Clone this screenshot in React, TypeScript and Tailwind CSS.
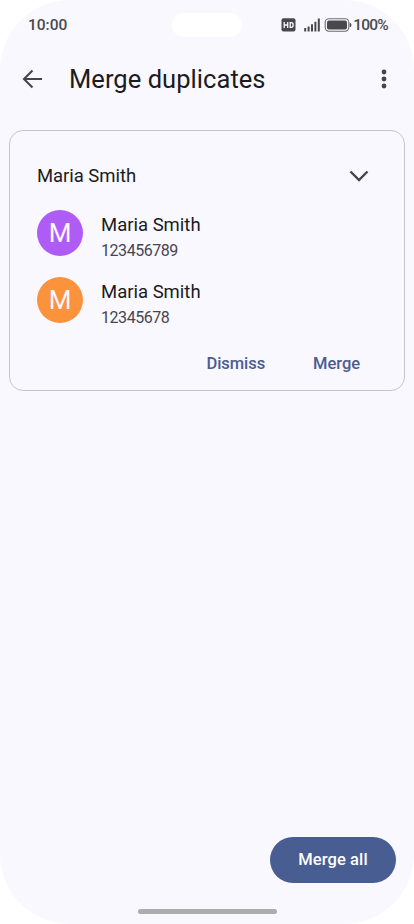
type Contact = {
  name: string;
  phone: string;
  color: string;
};

const contacts: Contact[] = [
  { name: 'Maria Smith', phone: '123456789', color: 'bg-[#af5cf7]' },
  { name: 'Maria Smith', phone: '12345678', color: 'bg-[#fb923c]' },
];

function StatusBar() {
  return (
    <div className="flex h-[50px] items-center justify-between pl-7 pr-[26px] text-[#49494d]">
      <span className="w-[144px] pt-[2px] text-[15.5px] font-medium">10:00</span>
      <div className="h-6 w-[70px] rounded-full bg-white" />
      <div className="flex w-[146px] items-center justify-end">
        <svg width="72" height="16" viewBox="0 0 72 16" className="shrink-0">
          <rect x="0.5" y="1.3" width="14" height="13.2" rx="2" fill="#49494d" />
          <path
            d="M3.2 5v6M6.7 5v6M3.2 8h3.5M9.2 5.6v4.8h.9c1.6 0 2.1-.9 2.1-2.4s-.5-2.4-2.1-2.4z"
            fill="none"
            stroke="#f9f8ff"
            strokeWidth="1.3"
          />
          <path
            d="M24.2 11v3.5M27.6 9.5v5M31 7.2v7.3M34.4 4.8v9.7M37.8 1.5v13"
            stroke="#49494d"
            strokeWidth="2"
          />
          <rect x="44.2" y="1.8" width="23.6" height="12.4" rx="3.6" fill="none" stroke="#6c6c70" strokeWidth="1.1" />
          <rect x="46" y="3.6" width="20" height="8.8" rx="2" fill="#49494d" />
          <path d="M69 6c1.5.5 1.5 3.5 0 4z" fill="#49494d" stroke="#49494d" strokeWidth="0.6" />
        </svg>
        <span className="text-[15.5px] font-medium leading-5 tracking-[-0.8px]">100%</span>
      </div>
    </div>
  );
}

function AppBar() {
  return (
    <header className="flex h-[58px] items-center pl-[22px] pr-[18px]">
      <button aria-label="Back">
        <svg width="22" height="22" viewBox="0 0 22 22" fill="none" stroke="#45454d" strokeWidth="2.1">
          <path d="M20 11H2.5M10.5 2.5L2 11l8.5 8.5" />
        </svg>
      </button>
      <h1 className="ml-[25px] flex-1 text-[25.5px] tracking-[0.05px] text-[#1b1b21]">Merge duplicates</h1>
      <button aria-label="More options">
        <svg width="24" height="22" viewBox="0 0 24 22" fill="#45454d">
          <circle cx="12" cy="4" r="2.4" />
          <circle cx="12" cy="11" r="2.4" />
          <circle cx="12" cy="18" r="2.4" />
        </svg>
      </button>
    </header>
  );
}

function ContactRow({ contact }: { contact: Contact }) {
  return (
    <li className="flex h-[46px]">
      <div className={`flex size-[46px] items-center justify-center rounded-full pt-px text-[26px] text-[#fdf7ff] ${contact.color}`}>
        M
      </div>
      <div className="ml-[18px] pt-[2px]">
        <p className="text-[18.5px] leading-[26px] text-[#1b1b21]">{contact.name}</p>
        <p className="text-[16px] leading-[26px] tracking-[-0.45px] text-[#47464f]">{contact.phone}</p>
      </div>
    </li>
  );
}

export default function App() {
  return (
    <div className="h-[924px] w-[414px] bg-white font-['Roboto','Liberation_Sans',sans-serif]">
      <div className="flex h-full flex-col rounded-[70px] bg-[#f9f8ff]">
        <StatusBar />
        <AppBar />

        <section className="mx-[9px] mt-[22px] h-[261px] rounded-[14px] border border-[#c6c5cf] pl-[27px] pr-[35px]">
          <div className="mt-[33px] flex h-6 items-center justify-between">
            <h2 className="pt-[2px] text-[18.5px] tracking-[-0.05px] text-[#1b1b21]">Maria Smith</h2>
            <svg width="20" height="12" viewBox="0 0 20 12" fill="none" stroke="#45454d" strokeWidth="2.4">
              <path d="M1.5 1.5l8.5 8.5 8.5-8.5" />
            </svg>
          </div>
          <ul className="mt-[22px] flex flex-col gap-[20.5px]">
            {contacts.map((contact) => (
              <ContactRow key={contact.phone} contact={contact} />
            ))}
          </ul>
          <div className="mt-[29.5px] flex justify-end gap-12 pr-[9px] text-[16.5px] font-medium leading-6 tracking-[-0.05px] text-[#4a5c92]">
            <button>Dismiss</button>
            <button>Merge</button>
          </div>
        </section>

        <button className="mb-[26px] mr-[18px] mt-auto h-[46px] w-[126px] self-end rounded-full bg-[#485d92] text-[16.5px] font-medium tracking-[0.1px] text-white">
          Merge all
        </button>
        <div className="mb-[10px] h-[5px] w-[139px] self-center rounded-full bg-[#adadb0]" />
      </div>
    </div>
  );
}
